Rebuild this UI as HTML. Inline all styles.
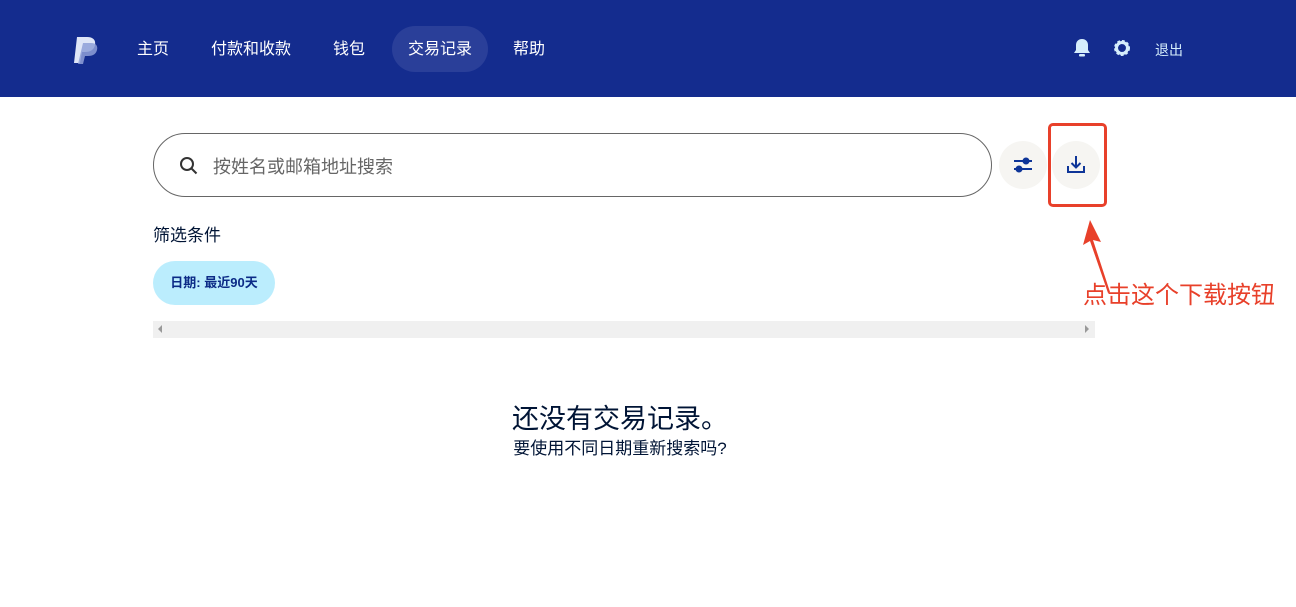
<!DOCTYPE html>
<html><head><meta charset="utf-8"><style>
*{margin:0;padding:0;box-sizing:border-box}
body{width:1296px;height:607px;background:#fff;font-family:"Liberation Sans","Noto Sans CJK SC",sans-serif;position:relative;overflow:hidden;color:#001435}
.nav{position:absolute;left:0;top:0;width:1296px;height:97px;background:#142c8e}
.nav a{position:absolute;top:26px;height:46px;line-height:48px;color:#fff;font-size:16px;text-decoration:none}
.act{background:#2a3f99;border-radius:23px;padding:0 16px}
.abs{position:absolute}
</style></head><body>
<div class="nav">
<svg class="abs" style="left:73px;top:35px" width="26" height="30" viewBox="0 0 26 30"><path d="M4 2h10c6 0 9 3 8 8-1 5-5 7-10 7H9l-2 11H1z" fill="#dfe6f7"/><path d="M10 8h8c5 0 7 3 6 7-1 4-4 6-9 6h-3l-2 8H5z" fill="#8fa0d8" opacity=".85"/></svg>
<a style="left:137px">主页</a>
<a style="left:211px">付款和收款</a>
<a style="left:333px">钱包</a>
<a class="act" style="left:392px">交易记录</a>
<a style="left:513px">帮助</a>
<svg class="abs" style="left:1073px;top:38px" width="18" height="20" viewBox="0 0 18 20"><path d="M9 1c-4 0-6 3-6 6v5l-2 3h16l-2-3V7c0-3-2-6-6-6z" fill="#d6eefc"/><rect x="6" y="16" width="6" height="2.5" rx="1" fill="#d6eefc"/></svg>
<svg class="abs" style="left:1113px;top:39px" width="18" height="18" viewBox="0 0 18 18"><circle cx="9" cy="9" r="6" fill="none" stroke="#d6eefc" stroke-width="4" stroke-dasharray="2.4 1.6"/><circle cx="9" cy="9" r="5.5" fill="none" stroke="#d6eefc" stroke-width="3"/></svg>
<a style="left:1155px;font-size:14px;color:#d6eefc">退出</a>
</div>
<div class="abs" style="left:153px;top:133px;width:839px;height:64px;border:1px solid #666;border-radius:32px"></div>
<svg class="abs" style="left:179px;top:156px" width="19" height="19" viewBox="0 0 19 19"><circle cx="8" cy="8" r="6" fill="none" stroke="#333" stroke-width="2"/><path d="M12.5 12.5l5 5" stroke="#333" stroke-width="2"/></svg>
<div class="abs" style="left:213px;top:153px;font-size:18px;color:#666">按姓名或邮箱地址搜索</div>
<div class="abs" style="left:999px;top:141px;width:48px;height:48px;border-radius:50%;background:#f6f5f2"></div>
<svg class="abs" style="left:1012px;top:155px" width="22" height="20" viewBox="0 0 22 20"><path d="M2 6h18M2 14h18" stroke="#0e3598" stroke-width="2"/><circle cx="14" cy="6" r="3.5" fill="#0e3598"/><circle cx="7" cy="14" r="3.5" fill="#0e3598"/></svg>
<div class="abs" style="left:1052px;top:141px;width:48px;height:48px;border-radius:50%;background:#f6f5f2"></div>
<svg class="abs" style="left:1066px;top:154px" width="20" height="20" viewBox="0 0 20 20"><path d="M10 2v11M5.5 9l4.5 4.5L14.5 9M2 12v6h16v-6" fill="none" stroke="#0e3598" stroke-width="2"/></svg>
<div class="abs" style="left:1048px;top:123px;width:59px;height:84px;border:3px solid #e8402a;border-radius:5px"></div>
<svg class="abs" style="left:1080px;top:215px" width="40" height="80" viewBox="0 0 40 80"><path d="M10 5L3 30l7-4 18 52 2-1-17-52 8 2z" fill="#e8402a"/></svg>
<div class="abs" style="left:1083px;top:275px;font-size:24px;color:#e8402a">点击这个下载按钮</div>
<div class="abs" style="left:153px;top:221px;font-size:17px">筛选条件</div>
<div class="abs" style="left:153px;top:261px;width:122px;height:44px;border-radius:22px;background:#bbedfd;color:#0b2a86;font-weight:bold;font-size:13px;line-height:44px;text-align:center">日期: 最近90天</div>
<div class="abs" style="left:153px;top:321px;width:942px;height:17px;background:#f0f0f0"></div>
<div class="abs" style="left:158px;top:325px;border:4px solid transparent;border-right-color:#999;border-left:0"></div>
<div class="abs" style="left:1085px;top:325px;border:4px solid transparent;border-left-color:#999;border-right:0"></div>
<div class="abs" style="left:0;width:1240px;top:397px;text-align:center;font-size:27px">还没有交易记录。</div>
<div class="abs" style="left:0;width:1240px;top:434px;text-align:center;font-size:17px">要使用不同日期重新搜索吗?</div>
</body></html>
